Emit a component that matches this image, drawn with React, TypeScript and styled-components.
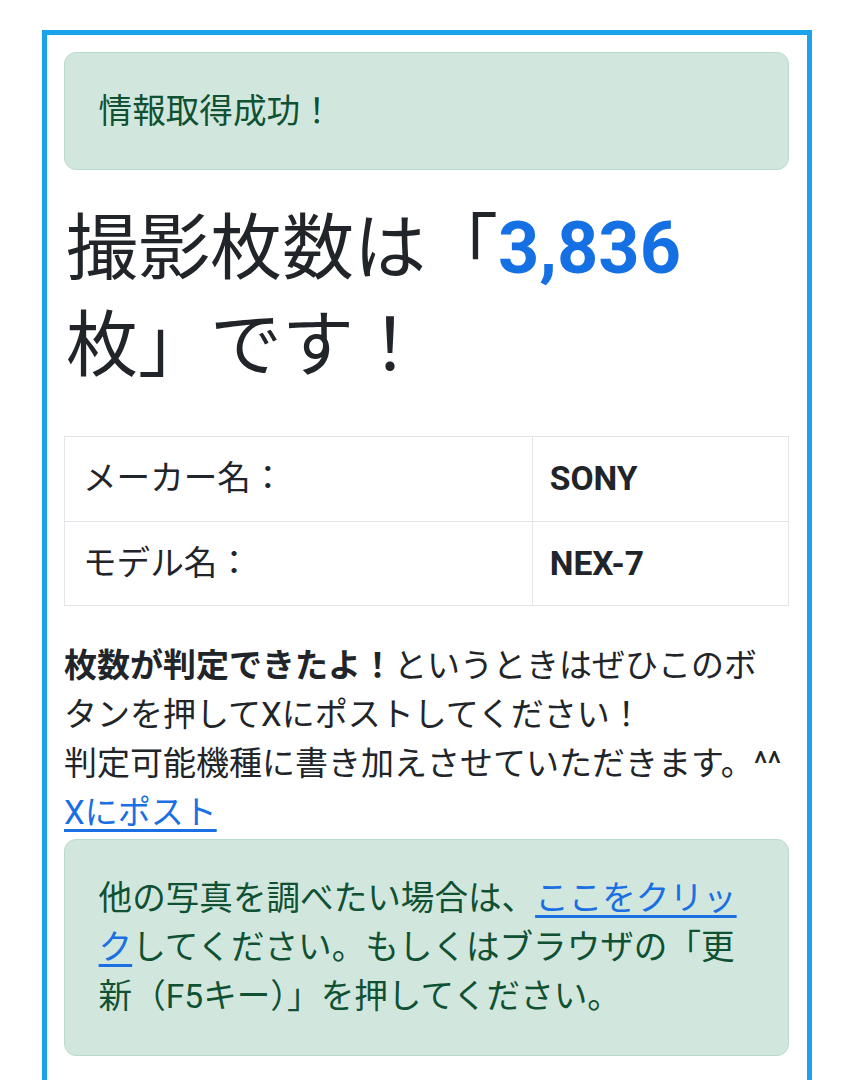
import React from 'react';
import styled, { createGlobalStyle } from 'styled-components';

const COLORS = {
  frame: '#1aa3ec',
  text: '#212529',
  primary: '#1470e3',
  link: '#1a6fe2',
  successBg: '#d1e7dd',
  successBorder: '#badbcc',
  successText: '#0f5132',
  line: '#e1e4e8',
};

const GlobalStyle = createGlobalStyle`
  html, body {
    margin: 0;
    padding: 0;
    background: #fff;
  }
  body {
    font-family: Roboto, "Noto Sans CJK JP", "Noto Sans", sans-serif;
    font-size: 33px;
    line-height: 49px;
    color: ${COLORS.text};
  }
  * {
    box-sizing: border-box;
  }
`;

interface SpecRow {
  label: string;
  value: string;
}

const specs: SpecRow[] = [
  { label: 'メーカー名：', value: 'SONY' },
  { label: 'モデル名：', value: 'NEX-7' },
];

export default function App() {
  return (
    <>
      <GlobalStyle />
      <Frame>
        <Alert>情報取得成功！</Alert>
        <Heading>
          撮影枚数は「<Count>3,836</Count>枚」です！
        </Heading>
        <SpecTable>
          <tbody>
            {specs.map((row) => (
              <tr key={row.label}>
                <LabelCell>{row.label}</LabelCell>
                <ValueCell>{row.value}</ValueCell>
              </tr>
            ))}
          </tbody>
        </SpecTable>
        <Message>
          <strong>枚数が判定できたよ！</strong>というときはぜひこのボタンを押してXにポストしてください！
          <br />
          判定可能機種に書き加えさせていただきます。^^
        </Message>
        <PostLink href="#">Xにポスト</PostLink>
        <Alert>
          他の写真を調べたい場合は、<InlineLink href="#">ここをクリック</InlineLink>
          してください。もしくはブラウザの「更新（F5キー）」を押してください。
        </Alert>
      </Frame>
    </>
  );
}

const Frame = styled.div`
  margin: 30px 41px 0 42px;
  padding: 17px 18px 24px 17px;
  border: 5px solid ${COLORS.frame};
`;

const Alert = styled.div`
  padding: 33.6px;
  margin-bottom: 30px;
  border: 1px solid ${COLORS.successBorder};
  border-radius: 12px;
  background: ${COLORS.successBg};
  color: ${COLORS.successText};
  font-size: 33.6px;
`;

const Heading = styled.h1`
  margin: 0 0 42px;
  padding: 0 12px 0 2px;
  font-size: 72px;
  line-height: 97px;
  font-weight: 400;
`;

const Count = styled.span`
  color: ${COLORS.primary};
  font-weight: 700;
`;

const SpecTable = styled.table`
  width: 100%;
  border-collapse: collapse;
  margin-bottom: 35px;
  font-size: 33.6px;
`;

const LabelCell = styled.td`
  width: 64.6%;
  padding: 17.3px 18px;
  border: 1px solid ${COLORS.line};
`;

const ValueCell = styled.td`
  padding: 17.3px 17px;
  border: 1px solid ${COLORS.line};
  font-weight: 700;
`;

const Message = styled.p`
  margin: 0;
  padding-right: 3px;
  strong {
    font-weight: 700;
  }
`;

const PostLink = styled.a`
  display: block;
  width: fit-content;
  margin-bottom: 2px;
  color: ${COLORS.link};
  text-decoration: underline;
  text-underline-offset: 5px;
`;

const InlineLink = styled.a`
  color: ${COLORS.link};
  text-decoration: underline;
  text-underline-offset: 5px;
`;
